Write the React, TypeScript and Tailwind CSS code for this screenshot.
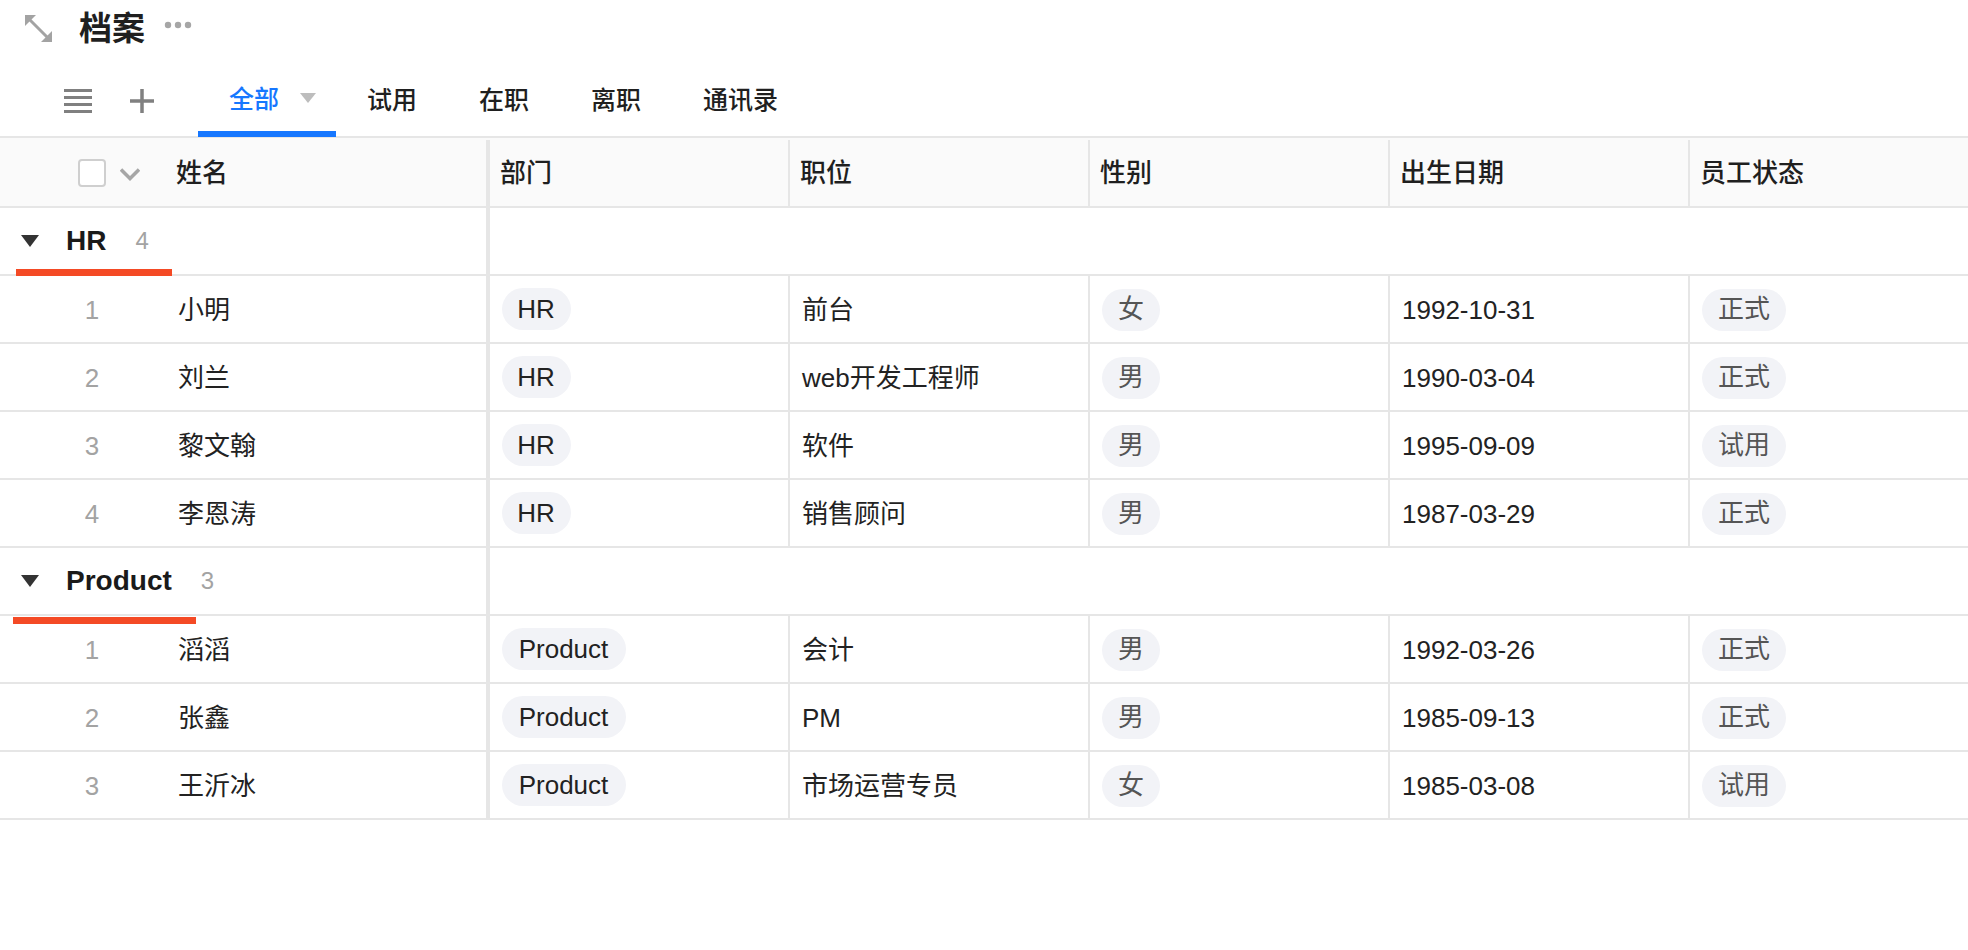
const FONT = "font-['Liberation_Sans','Noto_Sans_CJK_SC',sans-serif]";

type Person = { name: string; job: string; sex: string; birth: string; status: string };

const groups: { dept: string; chipW: string; underline: string; people: Person[] }[] = [
  {
    dept: "HR",
    chipW: "w-[69px]",
    underline: "left-[16px] w-[156px] bottom-[-2px]",
    people: [
      { name: "小明", job: "前台", sex: "女", birth: "1992-10-31", status: "正式" },
      { name: "刘兰", job: "web开发工程师", sex: "男", birth: "1990-03-04", status: "正式" },
      { name: "黎文翰", job: "软件", sex: "男", birth: "1995-09-09", status: "试用" },
      { name: "李恩涛", job: "销售顾问", sex: "男", birth: "1987-03-29", status: "正式" },
    ],
  },
  {
    dept: "Product",
    chipW: "w-[124px]",
    underline: "left-[13px] w-[183px] bottom-[-10px]",
    people: [
      { name: "滔滔", job: "会计", sex: "男", birth: "1992-03-26", status: "正式" },
      { name: "张鑫", job: "PM", sex: "男", birth: "1985-09-13", status: "正式" },
      { name: "王沂冰", job: "市场运营专员", sex: "女", birth: "1985-03-08", status: "试用" },
    ],
  },
];

const tabs = ["试用", "在职", "离职", "通讯录"];
const columns = ["部门", "职位", "性别", "出生日期"];

const Chip = ({ text, className }: { text: string; className: string }) => (
  <span className={`flex h-[42px] items-center justify-center rounded-full bg-[#f2f3f7] ${className}`}>{text}</span>
);

const Toolbar = () => (
  <div className="h-[138px] border-b-2 border-[#e6e6e6]">
    <div className="flex h-[56px] items-center pl-[25px]">
      <svg width="27" height="27" viewBox="0 0 27 27" fill="#a3a3a3">
        <path d="M0 0h11L0 11z" />
        <path d="M27 27H16L27 16z" />
        <path d="M5 5l17 17" fill="none" stroke="#a3a3a3" strokeWidth="3" />
      </svg>
      <span className="ml-[27px] text-[33px] font-bold leading-none text-[#1f1f1f]">档案</span>
      <svg width="28" height="8" viewBox="0 0 28 8" className="ml-[19px] mb-[6px]" fill="#a6a6a6">
        <circle cx="4" cy="4" r="3.2" />
        <circle cx="14" cy="4" r="3.2" />
        <circle cx="24" cy="4" r="3.2" />
      </svg>
    </div>
    <div className="flex h-[81px] items-stretch pl-[64px]">
      <div className="flex items-center pt-[8px]">
        <svg width="28" height="24" viewBox="0 0 28 24" fill="#808080">
          <rect y="0" width="28" height="3" />
          <rect y="7" width="28" height="3" />
          <rect y="14" width="28" height="3" />
          <rect y="21" width="28" height="3" />
        </svg>
        <svg width="24" height="24" viewBox="0 0 24 24" className="ml-[38px]" fill="#808080">
          <rect x="10.25" width="3.5" height="24" />
          <rect y="10.25" width="24" height="3.5" />
        </svg>
      </div>
      <div className="ml-[44px] flex w-[138px] items-center border-b-[6px] border-[#1677ff] pl-[31px] pt-[13px] text-[25px] font-medium text-[#1677ff]">
        全部
        <svg width="16" height="10" viewBox="0 0 16 10" className="ml-[21px] mb-[4px]" fill="#bdbdbd">
          <path d="M0 0h16L8 10z" />
        </svg>
      </div>
      {tabs.map((tab) => (
        <div key={tab} className="flex items-center px-[31px] pt-[8px] text-[25px] font-medium text-[#1f1f1f]">
          {tab}
        </div>
      ))}
    </div>
  </div>
);

const HeaderRow = () => (
  <div className="flex h-[70px] border-b-2 border-[#e6e6e6] bg-[#fafafa] pt-[2px] text-[26px] font-medium text-[#1f1f1f]">
    <div className="flex w-[490px] items-center border-r-4 border-[#e6e6e6] pl-[78px]">
      <span className="h-[28px] w-[28px] rounded-[4px] border-2 border-[#cfcfcf] bg-white" />
      <svg width="20" height="13" viewBox="0 0 20 13" className="ml-[14px] mt-[3px]" fill="none" stroke="#a6a6a6" strokeWidth="3.5">
        <path d="M1 1.5l9 9 9-9" />
      </svg>
      <span className="ml-[36px]">姓名</span>
    </div>
    {columns.map((col) => (
      <div key={col} className="flex w-[300px] items-center border-r-2 border-[#e6e6e6] pl-[10px]">
        {col}
      </div>
    ))}
    <div className="flex flex-1 items-center pl-[10px]">员工状态</div>
  </div>
);

const GroupRow = ({ dept, count, underline }: { dept: string; count: number; underline: string }) => (
  <div className="relative flex h-[68px] border-b-2 border-[#e6e6e6]">
    <div className="flex w-[490px] items-center border-r-4 border-[#e6e6e6] pl-[21px]">
      <svg width="18" height="12" viewBox="0 0 18 12" fill="#333333">
        <path d="M0 0h18L9 12z" />
      </svg>
      <span className="ml-[27px] text-[28px] font-bold text-[#1a1a1a]">{dept}</span>
      <span className="ml-[29px] text-[24px] text-[#a3a3a3]">{count}</span>
    </div>
    <span className={`absolute h-[7px] bg-[#f44a25] ${underline}`} />
  </div>
);

const PersonRow = ({ index, dept, chipW, person }: { index: number; dept: string; chipW: string; person: Person }) => (
  <div className="flex h-[68px] border-b-2 border-[#e6e6e6] text-[26px] text-[#222222]">
    <div className="flex w-[490px] items-center border-r-4 border-[#e6e6e6] pt-[2px]">
      <span className="w-[178px] pl-[6px] text-center text-[#a3a3a3]">{index}</span>
      <span>{person.name}</span>
    </div>
    <div className="flex w-[300px] items-center border-r-2 border-[#e6e6e6] pl-[12px]">
      <Chip text={dept} className={`${chipW} pr-[1px]`} />
    </div>
    <div className="flex w-[300px] items-center border-r-2 border-[#e6e6e6] pl-[12px] pt-[2px]">{person.job}</div>
    <div className="flex w-[300px] items-center border-r-2 border-[#e6e6e6] pl-[12px] pt-[1px]">
      <Chip text={person.sex} className="w-[58px] text-[#555555]" />
    </div>
    <div className="flex w-[300px] items-center border-r-2 border-[#e6e6e6] pl-[12px] pt-[2px]">{person.birth}</div>
    <div className="flex flex-1 items-center pl-[12px] pt-[1px]">
      <Chip text={person.status} className="w-[84px] text-[#555555]" />
    </div>
  </div>
);

export default function App() {
  return (
    <div className={`h-[950px] w-[1968px] overflow-hidden bg-white ${FONT}`}>
      <Toolbar />
      <HeaderRow />
      {groups.map((group) => (
        <div key={group.dept}>
          <GroupRow dept={group.dept} count={group.people.length} underline={group.underline} />
          {group.people.map((person, i) => (
            <PersonRow key={person.name} index={i + 1} dept={group.dept} chipW={group.chipW} person={person} />
          ))}
        </div>
      ))}
    </div>
  );
}
